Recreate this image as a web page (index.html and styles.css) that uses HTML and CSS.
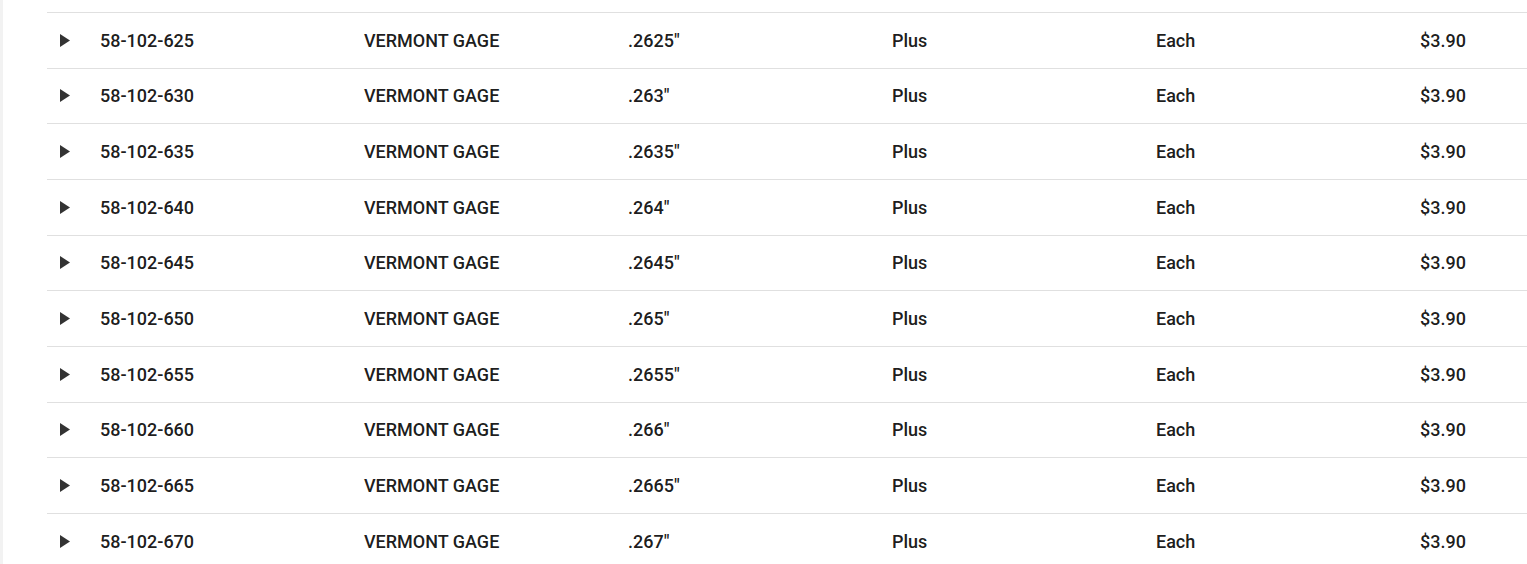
FILE: index.html
```html
<!DOCTYPE html>
<html lang="en">
<head>
<meta charset="utf-8">
<title>Parts</title>
<link rel="stylesheet" href="styles.css">
</head>
<body>
<div class="page">
  <div class="strip"></div>
  <div class="content">
    <div class="table">
      <div class="row"><div class="cell expand"><svg class="caret" viewBox="0 0 10 13"><polygon points="0,0 10,6.5 0,13"/></svg></div><div class="cell">58-102-625</div><div class="cell">VERMONT GAGE</div><div class="cell">.2625"</div><div class="cell">Plus</div><div class="cell">Each</div><div class="cell">$3.90</div></div>
      <div class="row"><div class="cell expand"><svg class="caret" viewBox="0 0 10 13"><polygon points="0,0 10,6.5 0,13"/></svg></div><div class="cell">58-102-630</div><div class="cell">VERMONT GAGE</div><div class="cell">.263"</div><div class="cell">Plus</div><div class="cell">Each</div><div class="cell">$3.90</div></div>
      <div class="row"><div class="cell expand"><svg class="caret" viewBox="0 0 10 13"><polygon points="0,0 10,6.5 0,13"/></svg></div><div class="cell">58-102-635</div><div class="cell">VERMONT GAGE</div><div class="cell">.2635"</div><div class="cell">Plus</div><div class="cell">Each</div><div class="cell">$3.90</div></div>
      <div class="row"><div class="cell expand"><svg class="caret" viewBox="0 0 10 13"><polygon points="0,0 10,6.5 0,13"/></svg></div><div class="cell">58-102-640</div><div class="cell">VERMONT GAGE</div><div class="cell">.264"</div><div class="cell">Plus</div><div class="cell">Each</div><div class="cell">$3.90</div></div>
      <div class="row"><div class="cell expand"><svg class="caret" viewBox="0 0 10 13"><polygon points="0,0 10,6.5 0,13"/></svg></div><div class="cell">58-102-645</div><div class="cell">VERMONT GAGE</div><div class="cell">.2645"</div><div class="cell">Plus</div><div class="cell">Each</div><div class="cell">$3.90</div></div>
      <div class="row"><div class="cell expand"><svg class="caret" viewBox="0 0 10 13"><polygon points="0,0 10,6.5 0,13"/></svg></div><div class="cell">58-102-650</div><div class="cell">VERMONT GAGE</div><div class="cell">.265"</div><div class="cell">Plus</div><div class="cell">Each</div><div class="cell">$3.90</div></div>
      <div class="row"><div class="cell expand"><svg class="caret" viewBox="0 0 10 13"><polygon points="0,0 10,6.5 0,13"/></svg></div><div class="cell">58-102-655</div><div class="cell">VERMONT GAGE</div><div class="cell">.2655"</div><div class="cell">Plus</div><div class="cell">Each</div><div class="cell">$3.90</div></div>
      <div class="row"><div class="cell expand"><svg class="caret" viewBox="0 0 10 13"><polygon points="0,0 10,6.5 0,13"/></svg></div><div class="cell">58-102-660</div><div class="cell">VERMONT GAGE</div><div class="cell">.266"</div><div class="cell">Plus</div><div class="cell">Each</div><div class="cell">$3.90</div></div>
      <div class="row"><div class="cell expand"><svg class="caret" viewBox="0 0 10 13"><polygon points="0,0 10,6.5 0,13"/></svg></div><div class="cell">58-102-665</div><div class="cell">VERMONT GAGE</div><div class="cell">.2665"</div><div class="cell">Plus</div><div class="cell">Each</div><div class="cell">$3.90</div></div>
      <div class="row"><div class="cell expand"><svg class="caret" viewBox="0 0 10 13"><polygon points="0,0 10,6.5 0,13"/></svg></div><div class="cell">58-102-670</div><div class="cell">VERMONT GAGE</div><div class="cell">.267"</div><div class="cell">Plus</div><div class="cell">Each</div><div class="cell">$3.90</div></div>
    </div>
  </div>
</div>
</body>
</html>
```

FILE: styles.css
```css
html, body {
  margin: 0;
  padding: 0;
  background: #ffffff;
  overflow: hidden;
  height: 564px;
}
.page {
  display: flex;
  height: 564px;
}
.strip {
  width: 3px;
  flex: none;
  background: #f2f2f2;
}
.content {
  flex: 1;
  padding-left: 44px;
  padding-top: 12px;
  min-width: 0;
  overflow: hidden;
}
.table {
  border-top: 1px solid #e0e0e0;
}
.row {
  display: grid;
  grid-template-columns: 53px repeat(5, 264px) minmax(0, 1fr);
  align-items: center;
  height: 55.667px;
  box-sizing: border-box;
  border-bottom: 1px solid #e0e0e0;
  font-family: Roboto, "Liberation Sans", sans-serif;
  font-weight: 500;
  font-size: 18px;
  color: rgba(0, 0, 0, 0.9);
}
.cell {
  white-space: nowrap;
  line-height: 20px;
  padding-top: 1px;
}
.expand {
  display: flex;
  align-items: center;
  padding-left: 13px;
  padding-top: 0;
}
.caret {
  width: 10px;
  height: 13px;
  fill: #333333;
}
```
